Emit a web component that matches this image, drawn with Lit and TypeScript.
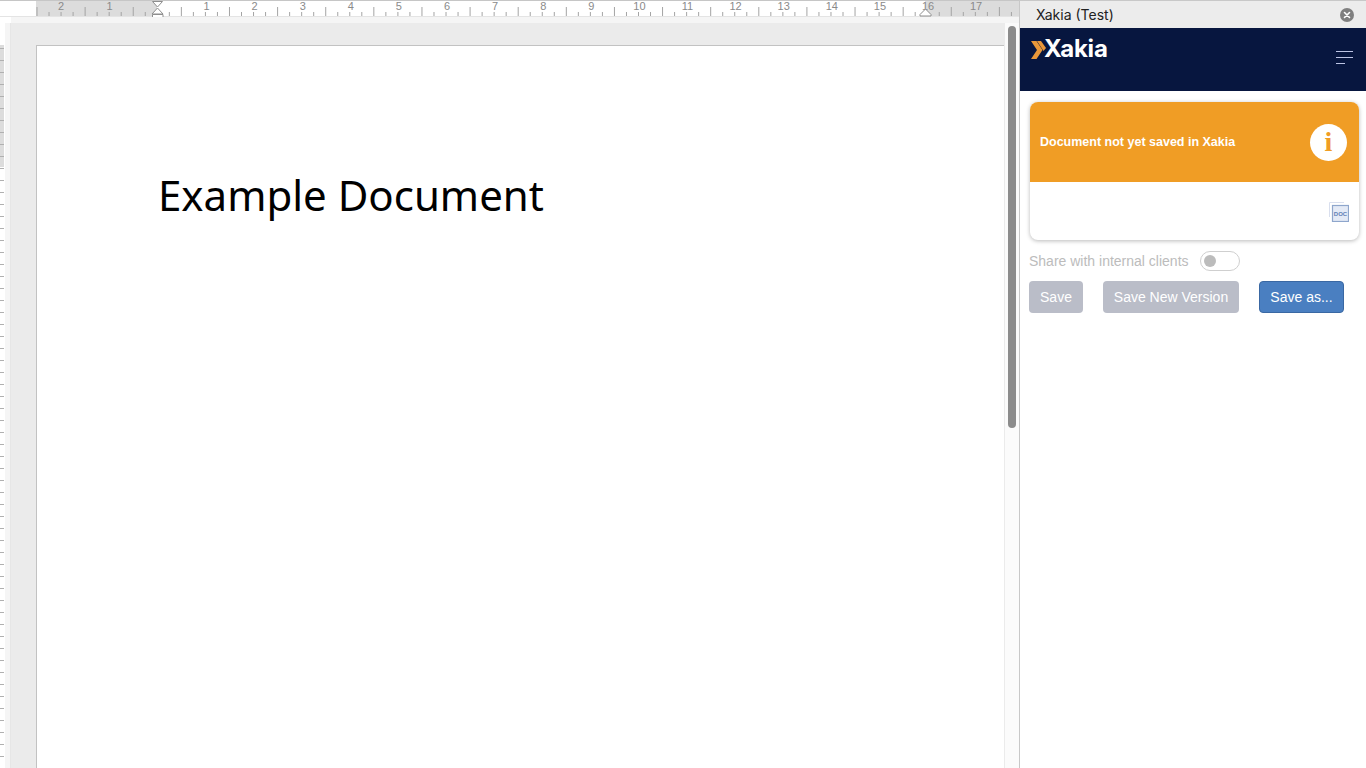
import { LitElement, html, css, svg } from "lit";
import { customElement } from "lit/decorators.js";

const range = (n: number) => Array.from({ length: n }, (_, i) => i);

@customElement("doc-ruler")
class DocRuler extends LitElement {
  static styles = css`
    :host { display: block; height: 17px; }
    svg { display: block; }
    text { font: 11px "Liberation Sans", sans-serif; fill: #8a8a8a; text-anchor: middle; }
    .tick { stroke: #a4a4a4; stroke-width: 1; }
    .marker { fill: #fff; stroke: #8e8e8e; stroke-width: 1; }
  `;
  render() {
    const labels: [string, number][] = [["2", 61], ["1", 109.5]];
    range(17).forEach((i) => labels.push([String(i + 1), 206.5 + i * 48.1]));
    const ticks = range(82).map((i) => 37 + i * 12.03);
    return html`<svg width="1019" height="23" viewBox="0 0 1019 23" style="overflow:visible">
      <rect x="0" y="0" width="1019" height="17" fill="#ffffff"></rect>
      <rect x="36" y="0" width="121" height="17" fill="#dcdcdc"></rect>
      <rect x="925" y="0" width="94" height="17" fill="#dcdcdc"></rect>
      <rect x="0" y="0" width="1019" height="1" fill="#c6c6c6"></rect>
      <rect x="0" y="16" width="1019" height="1" fill="#e4e4e4"></rect>
      ${ticks.map((x, i) => {
        const long = i % 4 === 0;
        return svg`<line class="tick" x1=${x} x2=${x} y1=${long ? 7 : 12} y2="16"></line>`;
      })}
      ${labels.map(([t, x]) => svg`<text x=${x} y="10">${t}</text>`)}
      ${range(13).map((i) => svg`<line class="tick" x1=${219.5 + i * 61} x2=${219.5 + i * 61} y1="17" y2="20"></line>`)}
      <path class="marker" d="M152.5 1.5h10L157.5 7z"></path>
      <path class="marker" d="M157.5 8l5.5 6h-11z"></path>
      <path class="marker" d="M152.500 14.500h10.500v5.500a1 1 0 0 1-1 1h-8.500a1 1 0 0 1-1-1z"></path>
      <path class="marker" d="M925.500 9l5.500 5.500v1.500h-11v-1.500z"></path>
    </svg>`;
  }
}

@customElement("side-ruler")
class SideRuler extends LitElement {
  static styles = css`
    :host { display: block; width: 5px; flex: none; overflow: hidden; }
    svg { display: block; }
    .tick { stroke: #b0b0b0; stroke-width: 1; }
  `;
  render() {
    return html`<svg width="5" height="745" viewBox="0 23 5 745">
      <rect x="0" y="23" width="5" height="745" fill="#fff"></rect>
      <rect x="0" y="45" width="4" height="122" fill="#dcdcdc"></rect>
      ${range(60).map((i) => svg`<line class="tick" x1="0" x2="4" y1=${48.5 + i * 12} y2=${48.5 + i * 12}></line>`)}
    </svg>`;
  }
}

@customElement("doc-pane")
class DocPane extends LitElement {
  static styles = css`
    :host { display: flex; flex-direction: column; width: 1019px; flex: none; height: 768px; overflow: hidden; background: #fff; }
    .strip { height: 6px; margin-left: 11px; background: #f5f5f5; flex: none; }
    .body { flex: 1; display: flex; min-height: 0; }
    .gutter { width: 6px; flex: none; background: #f5f5f5; border-right: 1px solid #e6e6e6; box-sizing: border-box; }
    .canvas { width: 994px; flex: none; background: #ebebeb; padding: 22px 0 0 25px; box-sizing: border-box; }
    .page {
      height: 100%; background: #fff; border-left: 1px solid #c2c2c2; border-top: 1px solid #c2c2c2;
      padding: 124px 0 0 121px; box-sizing: border-box; margin-right: 1px;
    }
    h1 { margin: 0; font: 400 42px/50px "Noto Sans", sans-serif; color: #000; }
    .track { flex: 1; background: #fbfbfb; padding: 3px 0 0 3px; box-sizing: border-box; }
    .thumb { width: 8px; height: 402px; border-radius: 4px; background: #8c8c8c; }
  `;
  render() {
    return html`
      <doc-ruler></doc-ruler>
      <div class="strip"></div>
      <div class="body">
        <side-ruler></side-ruler>
        <div class="gutter"></div>
        <div class="canvas"><div class="page"><h1>Example Document</h1></div></div>
        <div class="track"><div class="thumb"></div></div>
      </div>`;
  }
}

@customElement("app-root")
class AppRoot extends LitElement {
  static styles = css`
    :host { display: flex; width: 1366px; height: 768px; overflow: hidden; background: #fff; font-family: "Liberation Sans", Arial, sans-serif; }
    .panel { width: 347px; flex: none; border-left: 1px solid #c8c8c8; box-sizing: border-box; margin-right: -1px; background: #fff; display: flex; flex-direction: column; }
    .title {
      height: 28px; box-sizing: border-box; background: #ececec; border-top: 1px solid #c8c8c8;
      display: flex; align-items: center; justify-content: space-between; padding: 0 12px 0 16px;
      font: 14px/1 Inter, sans-serif; color: #222;
    }
    .title svg { display: block; }
    .nav { height: 63px; background: #07163f; display: flex; justify-content: space-between; padding: 9px 13px 0 11px; box-sizing: border-box; }
    .logo { display: flex; align-items: flex-start; height: 24px; }
    .logo svg { display: block; margin-top: 4px; flex: none; }
    .logo span { font: 700 24px/24px Inter, sans-serif; color: #fff; letter-spacing: -0.2px; margin-left: -4px; }
    .burger { display: flex; flex-direction: column; align-items: flex-start; gap: 5px; padding-top: 14px; width: 17px; }
    .burger i { display: block; height: 1px; width: 17px; background: #bcc4e4; }
    .burger i:last-child { width: 9px; }
    .content { padding: 11px 7px 0 10px; }
    .card { height: 138px; border-radius: 8px; background: #fff; box-shadow: 0 1px 4px rgba(0,0,0,.28); overflow: hidden; }
    .banner { height: 80px; background: #f09d25; display: flex; align-items: center; justify-content: space-between; padding: 0 12px 0 10px; }
    .banner b { font-size: 12.500px; font-weight: 700; color: #fff; }
    .info { width: 37px; height: 37px; border-radius: 50%; background: #fff; color: #f09d25; display: flex; align-items: center; justify-content: center; font: 700 28px/1 "Liberation Serif", serif; }
    .file { display: flex; justify-content: flex-end; padding: 20px 10px 0 0; }
    .file svg { display: block; }
    .share { display: flex; align-items: center; gap: 11px; margin: 11px 0 10px -1px; font-size: 14px; color: #bcbcbc; height: 20px; }
    .toggle { width: 40px; height: 20px; box-sizing: border-box; border: 1px solid #cfcfcf; border-radius: 10px; padding: 3px 0 0 3px; }
    .toggle i { display: block; width: 12px; height: 12px; border-radius: 50%; background: #bcbcbc; }
    .buttons { display: flex; gap: 20px; margin-left: -1px; }
    button { height: 32px; border: 1px solid transparent; border-radius: 4px; padding: 0; color: #fff; font: 14px "Liberation Sans", Arial, sans-serif; background: #babdc8; }
    .b1 { width: 54px; }
    .b2 { width: 136px; }
    .b3 { width: 85px; background: #4a7fc1; border-color: #3a68a3; }
  `;
  render() {
    return html`
      <doc-pane></doc-pane>
      <div class="panel">
        <div class="title">
          <span>Xakia (Test)</span>
          <svg width="14" height="14" viewBox="0 0 14 14">
            <circle cx="7" cy="7" r="7" fill="#7f7f7f"></circle>
            <path d="M4.500 4.500l5 5M9.500 4.500l-5 5" stroke="#fff" stroke-width="1.600" stroke-linecap="round"></path>
          </svg>
        </div>
        <div class="nav">
          <div class="logo">
            <svg width="17" height="18" viewBox="0 0 17 18">
              <path d="M0 0h5.500l6 9-6 9H0l6-9z" fill="#e9983a"></path>
              <path d="M6 0h4l5 7-2.500 3z" fill="#e9983a"></path>
            </svg>
            <span>Xakia</span>
          </div>
          <div class="burger"><i></i><i></i><i></i></div>
        </div>
        <div class="content">
          <div class="card">
            <div class="banner">
              <b>Document not yet saved in Xakia</b>
              <div class="info">i</div>
            </div>
            <div class="file">
              <svg width="20" height="20" viewBox="0 0 20 20">
                <path d="M0.500 15V0.500H15" fill="none" stroke="#d9dfee" stroke-width="1"></path>
                <rect x="3.500" y="3.500" width="16" height="16" fill="#e4eaf6" stroke="#8ea6cc" stroke-width="1.200"></rect>
                <text x="11.500" y="13.500" font-family="Liberation Sans" font-size="6" font-weight="700" fill="#5f7fb5" text-anchor="middle">DOC</text>
              </svg>
            </div>
          </div>
          <div class="share">
            <span>Share with internal clients</span>
            <div class="toggle"><i></i></div>
          </div>
          <div class="buttons">
            <button class="b1">Save</button>
            <button class="b2">Save New Version</button>
            <button class="b3">Save as...</button>
          </div>
        </div>
      </div>`;
  }
}
